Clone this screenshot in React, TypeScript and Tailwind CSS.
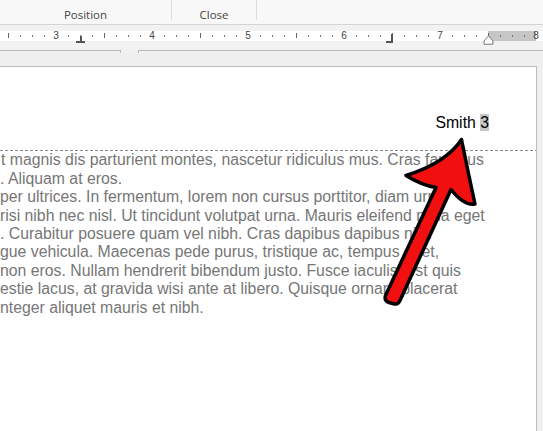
import React from 'react';

const bodyLines: { text: string; ml: string }[] = [
  { text: 't magnis dis parturient montes, nascetur ridiculus mus. Cras faucibus', ml: 'ml-[1px]' },
  { text: '. Aliquam at eros.', ml: 'ml-0' },
  { text: 'per ultrices. In fermentum, lorem non cursus porttitor, diam urna', ml: 'ml-0' },
  { text: 'risi nibh nec nisl. Ut tincidunt volutpat urna. Mauris eleifend nulla eget', ml: 'ml-0' },
  { text: '. Curabitur posuere quam vel nibh. Cras dapibus dapibus nisl.', ml: 'ml-0' },
  { text: 'gue vehicula. Maecenas pede purus, tristique ac, tempus eget,', ml: 'ml-0' },
  { text: 'non eros. Nullam hendrerit bibendum justo. Fusce iaculis, est quis', ml: 'ml-0' },
  { text: 'estie lacus, at gravida wisi ante at libero. Quisque ornare placerat', ml: 'ml-0' },
  { text: 'nteger aliquet mauris et nibh.', ml: 'ml-0' },
];

// eighth-inch marks, 96px per inch, "3" sits at x=56
const rulerMarks = Array.from({ length: 45 }, (_, i) => i - 4);

const Ruler: React.FC = () => (
  <div className="relative h-[10px] bg-white">
    <div className="absolute top-0 bottom-0 left-[488px] w-[48px] bg-[#c6c6c6]" />
    {rulerMarks.map((k) => {
      const x = 56 + k * 12;
      if (k % 8 === 0) {
        return (
          <span
            key={k}
            className="absolute top-[-1px] -translate-x-1/2 text-[10px] leading-[12px] text-[#444] font-['Liberation_Sans',sans-serif]"
            style={{ left: x }}
          >
            {3 + k / 8}
          </span>
        );
      }
      if (k % 4 === 0) {
        return <span key={k} className="absolute top-[2px] w-px h-[5px] bg-[#666]" style={{ left: x }} />;
      }
      return <span key={k} className="absolute top-[4px] w-px h-[2px] bg-[#777]" style={{ left: x }} />;
    })}
    {/* center tab */}
    <div className="absolute left-[76px] top-[5px] w-[9px] h-[7px]">
      <div className="absolute left-[4px] top-0 w-[2px] h-[6px] bg-[#555]" />
      <div className="absolute left-0 bottom-0 w-[9px] h-[2px] bg-[#555]" />
    </div>
    {/* right tab */}
    <div className="absolute left-[386px] top-[3px] w-[7px] h-[9px]">
      <div className="absolute right-0 top-0 w-[2px] h-[9px] bg-[#555]" />
      <div className="absolute left-0 bottom-0 w-[7px] h-[2px] bg-[#555]" />
    </div>
    {/* right indent */}
    <svg className="absolute left-[483px] top-[4px]" width="11" height="10" viewBox="0 0 11 10">
      <path d="M5.5 0.8 L10 6 L10 9.2 L1 9.2 L1 6 Z" fill="#fff" stroke="#777" strokeWidth="1" />
    </svg>
  </div>
);

const Arrow: React.FC = () => (
  <svg className="absolute inset-0 pointer-events-none" width="543" height="431" viewBox="0 0 543 431">
    <path
      d="M461.5 139.5 Q446 163 406 175.5 Q421 185 436 187.5 L385.5 295.5 Q384 301 389 302.5 L394.5 304 Q398.5 304.5 400 300.5 L451 189.5 Q464 206 475 204 Q468 172 461.5 139.5 Z"
      fill="#f20f0f"
      stroke="#000"
      strokeWidth="3.5"
      strokeLinejoin="round"
    />
  </svg>
);

export default function App() {
  return (
    <div className="relative w-[543px] h-[431px] overflow-hidden bg-[#efefef]">
      {/* Ribbon group labels */}
      <div className="flex h-[25px] bg-[#f8f8f8] border-b border-[#d3d3d3] font-['Open_Sans',sans-serif] text-[11.5px] text-[#444]">
        <div className="w-[171px] flex items-end justify-center pb-[1px]">Position</div>
        <div className="w-px h-[20px] bg-[#dcdcdc]" />
        <div className="w-[84px] flex flex-col items-center">
          <div className="h-[4px] overflow-hidden">
            <div className="-mt-[12px] leading-[16px]">and Footer</div>
          </div>
          <div className="mt-auto pb-[1px]">Close</div>
        </div>
        <div className="w-px h-[20px] bg-[#dcdcdc]" />
      </div>

      {/* Ruler */}
      <div className="pt-[6px] bg-[#f2f2f2]">
        <Ruler />
        <div className="h-[9px]" />
      </div>
      <div className="flex bg-[#f0f0f0]">
        <div className="w-[121px] h-[3px] border-t border-r border-[#b8b8b8]" />
        <div className="w-[17px]" />
        <div className="flex-1 h-[3px] border-t border-l border-[#b8b8b8]" />
      </div>
      <div className="h-[13px]" />

      {/* Page */}
      <div className="w-[537px] h-[400px] bg-white border-t border-r border-[#bcbcbc] font-['Liberation_Sans',Arial,sans-serif] text-[15.8px] leading-[18.4px]">
        <div className="pt-[47px] pr-[47px] text-right text-black">
          Smith <span className="bg-[#c6c6c6]">3</span>
        </div>
        <div className="mt-[18px] h-px bg-[repeating-linear-gradient(to_right,#8a8a8a_0_3px,transparent_3px_5px)]" />
        <div className="text-[#767676]">
          {bodyLines.map((l, i) => (
            <div key={i} className={`whitespace-nowrap ${l.ml}`}>
              {l.text}
            </div>
          ))}
        </div>
      </div>

      <Arrow />
    </div>
  );
}
